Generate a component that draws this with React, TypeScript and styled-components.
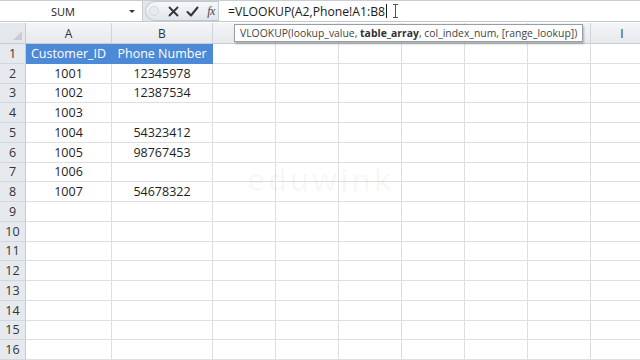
import React from "react";
import styled, { createGlobalStyle } from "styled-components";

const GlobalStyle = createGlobalStyle`
  html, body {
    margin: 0;
    padding: 0;
    background: #ffffff;
  }
  body {
    font-family: "Open Sans", "Liberation Sans", sans-serif;
  }
`;

const COLUMNS = ["A", "B", "C", "D", "E", "F", "G", "H", "I"];
const COLUMN_WIDTHS = [86, 101, 63, 63, 63, 63, 63, 63, 63];
// headers C..H sit under the function tooltip
const HIDDEN_HEADERS = ["C", "D", "E", "F", "G", "H"];

const ROWS: { id: string; phone: string }[] = [
  { id: "Customer_ID", phone: "Phone Number" },
  { id: "1001", phone: "12345978" },
  { id: "1002", phone: "12387534" },
  { id: "1003", phone: "" },
  { id: "1004", phone: "54323412" },
  { id: "1005", phone: "98767453" },
  { id: "1006", phone: "" },
  { id: "1007", phone: "54678322" },
];

const TOTAL_ROWS = 16;

const Page = styled.div`
  width: 640px;
  height: 360px;
  overflow: hidden;
  background: #ffffff;
  display: flex;
  flex-direction: column;
`;

const FormulaBar = styled.div`
  height: 22px;
  display: flex;
  flex-direction: row;
  align-items: stretch;
  background: #e3e7ec;
  border-top: 1px solid #c9ced5;
  border-bottom: 1px solid #c4c9d0;
  box-sizing: border-box;
`;

const NameBox = styled.div`
  width: 143px;
  position: relative;
  background: #ffffff;
  border-right: 1px solid #c7ccd3;
  display: flex;
  align-items: center;
  justify-content: center;
  padding-right: 16px;
  box-sizing: border-box;
  font-size: 11px;
  color: #222;
`;

const DropArrow = styled.span`
  position: absolute;
  right: 7px;
  top: 9px;
  width: 0;
  height: 0;
  border-left: 3px solid transparent;
  border-right: 3px solid transparent;
  border-top: 3px solid #333;
`;

const ButtonGroup = styled.div`
  width: 73px;
  margin-left: 2px;
  display: flex;
  align-items: center;
  gap: 5px;
  padding-left: 3px;
  box-sizing: border-box;
  background: linear-gradient(#f6f7f9, #e2e6eb);
  border: 1px solid #c3c8cf;
  border-right: none;
  border-radius: 11px 0 0 11px;
`;

const Grip = styled.span`
  width: 8px;
  height: 8px;
  border-radius: 50%;
  background: #e9ecef;
  border: 1px solid #d3d7dc;
  margin-right: 2px;
`;

const IconButton = styled.span`
  width: 14px;
  height: 14px;
  display: flex;
  align-items: center;
  justify-content: center;
  color: #3b3b3b;
`;

const FxLabel = styled.span`
  font-family: "Liberation Serif", serif;
  font-style: italic;
  font-size: 12px;
  color: #444;
  letter-spacing: -0.5px;
`;

const FormulaInput = styled.div`
  flex: 1;
  background: #ffffff;
  border-left: 1px solid #c7ccd3;
  display: flex;
  align-items: center;
  padding-left: 9px;
  font-size: 12.2px;
  color: #1a1a1a;
  position: relative;
`;

const Caret = styled.span`
  display: inline-block;
  width: 1px;
  height: 14px;
  background: #222;
  margin-left: 1px;
`;

const IBeam = styled.span`
  position: absolute;
  left: 176px;
  top: 3px;
  width: 1px;
  height: 14px;
  background: #555;
  &::before,
  &::after {
    content: "";
    position: absolute;
    left: -2px;
    width: 5px;
    height: 1px;
    background: #555;
  }
  &::before {
    top: 0;
  }
  &::after {
    bottom: 0;
  }
`;

const SheetArea = styled.div`
  position: relative;
  flex: 1;
  margin-top: 1px;
`;

const Grid = styled.div`
  display: grid;
  grid-template-columns: 26px ${COLUMN_WIDTHS.map((w) => `${w}px`).join(" ")};
  grid-template-rows: 21px repeat(${TOTAL_ROWS}, 19.75px);
`;

const Corner = styled.div`
  background: #e4e7ec;
  border-right: 1px solid #c8ccd2;
  border-bottom: 1px solid #c8ccd2;
  box-sizing: border-box;
  position: relative;
  &::after {
    content: "";
    position: absolute;
    right: 3px;
    bottom: 3px;
    width: 0;
    height: 0;
    border-left: 9px solid transparent;
    border-bottom: 9px solid #c9cdd3;
  }
`;

const ColHeader = styled.div`
  background: linear-gradient(#f4f5f7, #e6e9ed);
  border-right: 1px solid #d0d4d9;
  border-bottom: 1px solid #c8ccd2;
  box-sizing: border-box;
  display: flex;
  align-items: center;
  justify-content: center;
  font-size: 12px;
  color: #333;
`;

const RowHeader = styled.div`
  background: #e6e9ee;
  border-right: 1px solid #c8ccd2;
  border-bottom: 1px solid #d3d7dc;
  box-sizing: border-box;
  display: flex;
  align-items: center;
  justify-content: center;
  font-size: 12.5px;
  color: #333;
`;

const Cell = styled.div<{ $selected?: boolean }>`
  background: ${(p) => (p.$selected ? "#4c8ad7" : "#ffffff")};
  color: ${(p) => (p.$selected ? "#ffffff" : "#1e1e1e")};
  border-right: 1px solid ${(p) => (p.$selected ? "#4c8ad7" : "#dcdee1")};
  border-bottom: 1px solid ${(p) => (p.$selected ? "#4c8ad7" : "#dcdee1")};
  box-sizing: border-box;
  display: flex;
  align-items: center;
  justify-content: center;
  font-size: 12.5px;
  white-space: nowrap;
  overflow: hidden;
`;

const Tooltip = styled.div`
  position: absolute;
  left: 234px;
  top: 1px;
  height: 16px;
  padding: 0 5px;
  display: flex;
  align-items: center;
  background: #ffffff;
  border: 1px solid #9a9ea4;
  box-shadow: 1px 2px 2px rgba(0, 0, 0, 0.25);
  font-size: 10.4px;
  color: #444;
  white-space: nowrap;
  b {
    font-weight: 700;
    color: #333;
  }
`;

const Watermark = styled.div`
  position: absolute;
  left: 247px;
  top: 135px;
  font-family: "Noto Sans", sans-serif;
  font-size: 31px;
  font-weight: 600;
  letter-spacing: 2.5px;
  color: rgba(0, 0, 0, 0.028);
  pointer-events: none;
`;

function CrossIcon() {
  return (
    <svg width="11" height="11" viewBox="0 0 11 11">
      <path
        d="M1.5 1.5 L9.5 9.5 M9.5 1.5 L1.5 9.5"
        stroke="#333"
        strokeWidth="1.8"
        strokeLinecap="round"
      />
    </svg>
  );
}

function CheckIcon() {
  return (
    <svg width="13" height="11" viewBox="0 0 13 11">
      <path
        d="M1.5 6 L5 9.5 L11.5 1.5"
        stroke="#333"
        strokeWidth="2"
        fill="none"
        strokeLinecap="round"
        strokeLinejoin="round"
      />
    </svg>
  );
}

function App() {
  const rowNumbers = Array.from({ length: TOTAL_ROWS }, (_, i) => i + 1);

  return (
    <Page>
      <GlobalStyle />
      <FormulaBar>
        <NameBox>
          SUM
          <DropArrow />
        </NameBox>
        <ButtonGroup>
          <Grip />
          <IconButton>
            <CrossIcon />
          </IconButton>
          <IconButton>
            <CheckIcon />
          </IconButton>
          <IconButton>
            <FxLabel>fx</FxLabel>
          </IconButton>
        </ButtonGroup>
        <FormulaInput>
          =VLOOKUP(A2,Phone!A1:B8
          <Caret />
          <IBeam />
        </FormulaInput>
      </FormulaBar>
      <SheetArea>
        <Grid>
          <Corner />
          {COLUMNS.map((col) => (
            <ColHeader key={col}>
              {HIDDEN_HEADERS.includes(col) ? "" : col}
            </ColHeader>
          ))}
          {rowNumbers.map((n) => {
            const data = ROWS[n - 1];
            const selected = n === 1;
            return (
              <React.Fragment key={n}>
                <RowHeader>{n}</RowHeader>
                {COLUMNS.map((col, i) => {
                  let text = "";
                  if (data && i === 0) text = data.id;
                  if (data && i === 1) text = data.phone;
                  return (
                    <Cell key={col} $selected={selected && i < 2}>
                      {text}
                    </Cell>
                  );
                })}
              </React.Fragment>
            );
          })}
        </Grid>
        <Tooltip>
          VLOOKUP(lookup_value,&nbsp;<b>table_array</b>, col_index_num,
          [range_lookup])
        </Tooltip>
        <Watermark>eduwink</Watermark>
      </SheetArea>
    </Page>
  );
}

export default App;
